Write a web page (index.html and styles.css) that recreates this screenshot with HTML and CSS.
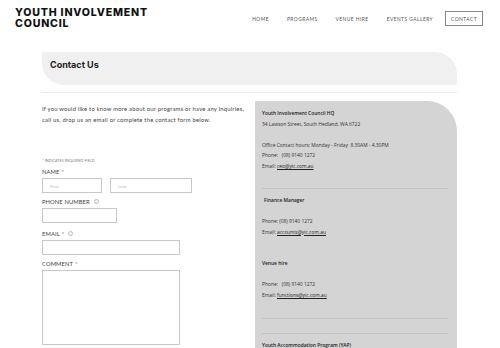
FILE: index.html
```html
<!DOCTYPE html>
<html lang="en">
<head>
    <meta charset="UTF-8">
    <meta name="viewport" content="width=device-width, initial-scale=1.0">
    <title>Contact Us - Youth Involvement Council</title>
    <link rel="stylesheet" href="styles.css">
</head>
<body>
    <header class="site-header">
        <div class="site-logo">Youth Involvement<br>Council</div>
        <nav class="site-nav">
            <a href="#">Home</a>
            <a href="#">Programs</a>
            <a href="#">Venue Hire</a>
            <a href="#">Events Gallery</a>
            <a href="#" class="nav-active">Contact</a>
        </nav>
    </header>

    <main class="page">
        <div class="page-banner">
            <h1 class="page-title">Contact Us</h1>
        </div>
        <hr class="page-rule">

        <div class="contact-columns">
            <div class="contact-form-col">
                <p class="intro">
                    If you would like to know more about our programs or have any inquiries,
                    call us, drop us an email or complete the contact form below.
                </p>

                <form class="contact-form">
                    <p class="required-note">* Indicates required field</p>

                    <label class="field-label">Name <span class="req">*</span></label>
                    <div class="name-row">
                        <input type="text" class="input input-first" placeholder="First">
                        <input type="text" class="input input-last" placeholder="Last">
                    </div>

                    <label class="field-label">Phone Number <span class="info-icon">i</span></label>
                    <input type="text" class="input input-phone">

                    <label class="field-label">Email <span class="req">*</span><span class="info-icon">i</span></label>
                    <input type="text" class="input input-email">

                    <label class="field-label">Comment <span class="req">*</span></label>
                    <textarea class="input input-comment"></textarea>
                </form>
            </div>

            <aside class="contact-panel">
                <p class="panel-strong">Youth Involvement Council HQ</p>
                <p>34 Lawson Street, South Hedland, WA 6722</p>
                <p class="gap-above">Office Contact hours: Monday - Friday &nbsp;8.30AM - 4.30PM</p>
                <p>Phone: &nbsp; (08) 9140 1272</p>
                <p>Email: <a href="#">ceo@yic.com.au</a></p>

                <hr class="panel-rule rule-first">

                <p class="panel-strong indent">Finance Manager</p>
                <p class="gap-above">Phone: (08) 9140 1272</p>
                <p>Email: <a href="#">accounts@yic.com.au</a></p>

                <p class="panel-strong gap-large">Venue hire</p>
                <p class="gap-above">Phone: &nbsp; (08) 9140 1272</p>
                <p>Email: <a href="#">functions@yic.com.au</a></p>

                <hr class="panel-rule rule-second">
                <hr class="panel-rule rule-third">

                <p class="panel-strong">Youth Accommodation Program (YAP)</p>
            </aside>
        </div>
    </main>
</body>
</html>
```

FILE: styles.css
```css
* {
    box-sizing: border-box;
}

html,
body {
    height: 348px;
    overflow: hidden;
}

body {
    margin: 0;
    background-color: #fff;
    color: #333;
    font-family: "Lato", "Open Sans", sans-serif;
}

.site-header {
    display: flex;
    align-items: flex-start;
    justify-content: space-between;
    height: 40px;
    padding: 7px 17px 0 15px;
}

.site-logo {
    font-family: "Inter", "Lato", sans-serif;
    font-size: 10.6px;
    font-weight: 800;
    line-height: 11px;
    letter-spacing: 0.8px;
    text-transform: uppercase;
    color: #111;
}

.site-nav {
    display: flex;
    align-items: center;
    gap: 18px;
    padding-top: 4px;
}

.site-nav a {
    font-family: "Lato", sans-serif;
    font-size: 4.9px;
    letter-spacing: 0.45px;
    text-transform: uppercase;
    text-decoration: none;
    color: #555;
}

.site-nav .nav-active {
    display: flex;
    align-items: center;
    height: 15px;
    padding: 0 5px;
    border: 1px solid #888;
    margin-left: -6px;
}

.page {
    padding: 12px 43px 0 42px;
}

.page-banner {
    height: 33px;
    display: flex;
    align-items: center;
    padding-left: 8px;
    background-color: #f0f0f0;
    border-radius: 0 22px 0 22px;
}

.page-title {
    margin: 0;
    font-family: "Inter", "Lato", sans-serif;
    font-size: 9px;
    font-weight: 700;
    color: #222;
    padding-bottom: 8px;
}

.page-rule {
    margin: 7px 0 0;
    border: 0;
    border-top: 1px solid #ececec;
}

.contact-columns {
    display: flex;
    justify-content: space-between;
    margin-top: 7px;
}

.contact-form-col {
    width: 206px;
}

.intro {
    max-width: 204px;
    margin: 3px 0 0;
    font-size: 5.9px;
    letter-spacing: 0.2px;
    line-height: 11px;
    color: #444;
}

.contact-form {
    display: flex;
    flex-direction: column;
    align-items: flex-start;
    margin-top: 33px;
}

.required-note {
    margin: 0;
    font-size: 3.6px;
    letter-spacing: 0.1px;
    text-transform: uppercase;
    color: #777;
}

.field-label {
    display: flex;
    align-items: center;
    height: 7px;
    margin: 5px 0 3px;
    font-size: 5.8px;
    letter-spacing: 0.1px;
    text-transform: uppercase;
    color: #444;
}

.req {
    margin-left: 2px;
    color: #777;
}

.info-icon {
    display: inline-flex;
    align-items: center;
    justify-content: center;
    width: 5px;
    height: 5px;
    margin-left: 4px;
    border: 0.5px solid #bbb;
    border-radius: 50%;
    font-size: 3.5px;
    color: #aaa;
    text-transform: none;
}

.name-row {
    display: flex;
    gap: 8px;
}

.input {
    display: block;
    height: 15px;
    margin: 0;
    padding: 0 7px;
    border: 1px solid #c8c8c8;
    background-color: #fff;
    font-family: "Lato", sans-serif;
    font-size: 4.6px;
    color: #444;
}

.input::placeholder {
    color: #bbb;
}

.input-first {
    width: 60px;
}

.input-last {
    width: 82px;
}

.input-phone {
    width: 75px;
    margin-bottom: 2px;
}

.input-email {
    width: 138px;
}

.input-comment {
    width: 138px;
    height: 75px;
    resize: none;
}

.contact-panel {
    width: 202px;
    height: 248px;
    margin-top: 1px;
    padding: 7px 8px 0 7px;
    background-color: #d4d4d4;
    border-radius: 0 30px 0 0;
    font-family: "Open Sans", sans-serif;
    font-size: 4.9px;
    color: #333;
    overflow: hidden;
}

.contact-panel p {
    margin: 0;
    line-height: 10.8px;
}

.contact-panel a {
    color: #222;
}

.panel-strong {
    color: #222;
    font-weight: 600;
}

.indent {
    padding-left: 2px;
}

.gap-above {
    margin-top: 10px !important;
}

.gap-large {
    margin-top: 21px !important;
}

.panel-rule {
    border: 0;
    border-top: 1px solid #c4c4c4;
    margin: 0 1px 0 0;
}

.rule-first {
    margin-top: 16px;
    margin-bottom: 6px;
}

.rule-second {
    margin-top: 17px;
}

.rule-third {
    margin-top: 14px;
    margin-bottom: 6px;
}
```
